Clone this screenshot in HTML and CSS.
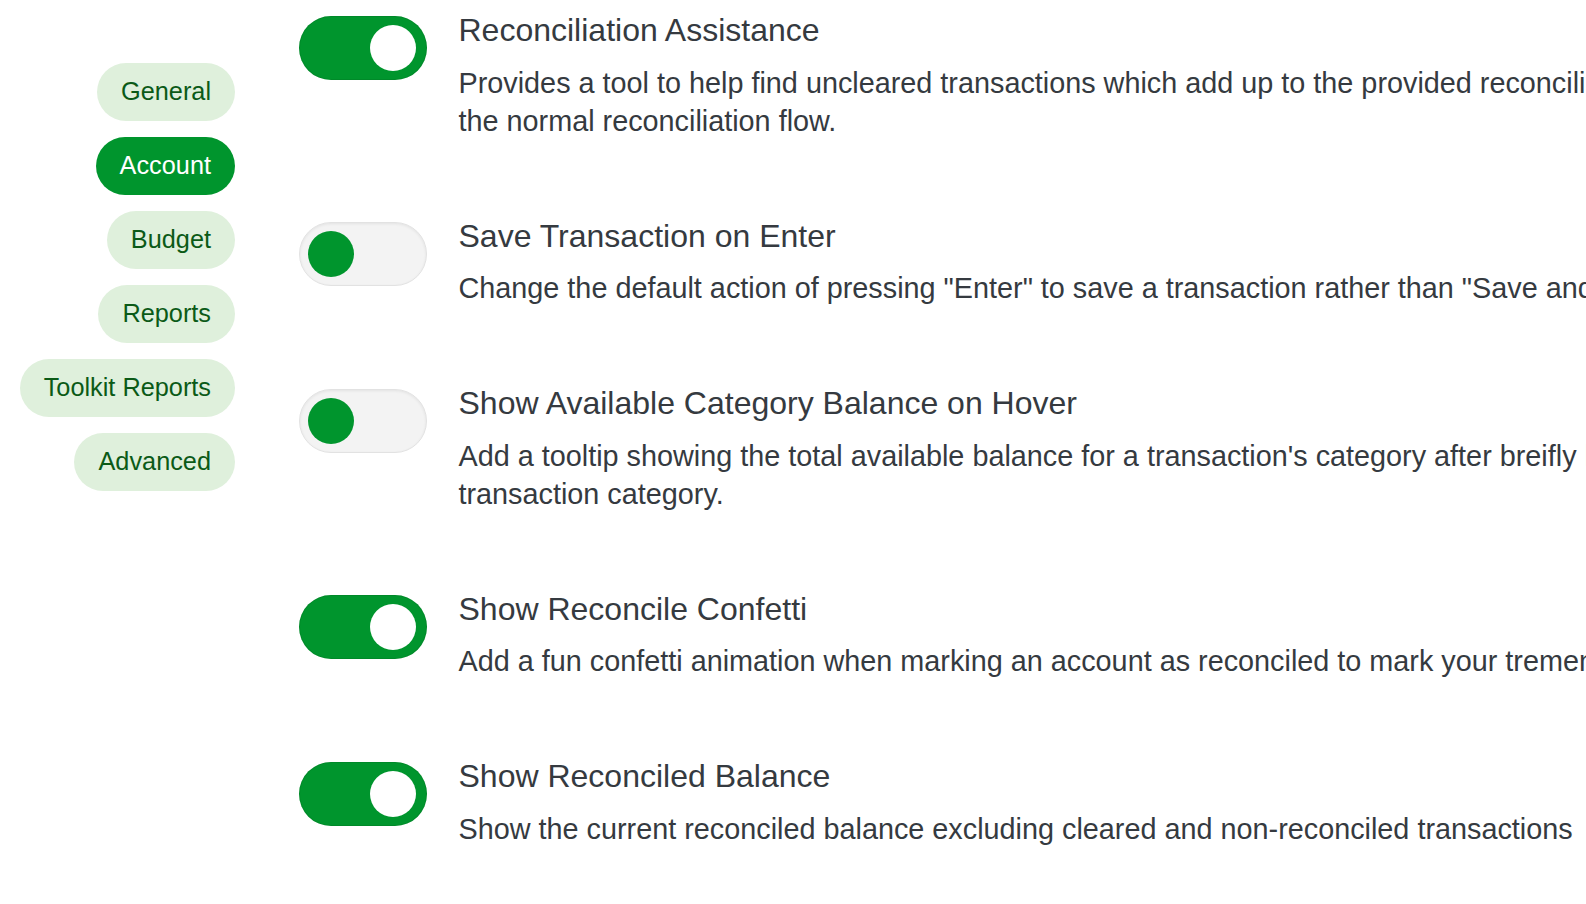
FILE: index.html
```html
<!DOCTYPE html>
<html lang="en">
<head>
<meta charset="utf-8">
<title>Settings</title>
<link rel="stylesheet" href="styles.css">
</head>
<body>
<div class="page">
  <nav class="sidebar">
    <a class="pill">General</a>
    <a class="pill active">Account</a>
    <a class="pill">Budget</a>
    <a class="pill">Reports</a>
    <a class="pill">Toolkit Reports</a>
    <a class="pill">Advanced</a>
  </nav>
  <main class="settings">
    <section class="setting">
      <div class="switch on"><span class="knob"></span></div>
      <div class="setting-text">
        <h3 class="setting-title">Reconciliation Assistance</h3>
        <p class="setting-desc">Provides a tool to help find uncleared transactions which add up to the provided reconciliation balance outside of the normal reconciliation flow.</p>
      </div>
    </section>
    <section class="setting">
      <div class="switch off"><span class="knob"></span></div>
      <div class="setting-text">
        <h3 class="setting-title">Save Transaction on Enter</h3>
        <p class="setting-desc">Change the default action of pressing "Enter" to save a transaction rather than "Save and add another".</p>
      </div>
    </section>
    <section class="setting">
      <div class="switch off"><span class="knob"></span></div>
      <div class="setting-text">
        <h3 class="setting-title">Show Available Category Balance on Hover</h3>
        <p class="setting-desc">Add a tooltip showing the total available balance for a transaction's category after breifly hovering over the transaction category.</p>
      </div>
    </section>
    <section class="setting">
      <div class="switch on"><span class="knob"></span></div>
      <div class="setting-text">
        <h3 class="setting-title">Show Reconcile Confetti</h3>
        <p class="setting-desc">Add a fun confetti animation when marking an account as reconciled to mark your tremendous achievement!</p>
      </div>
    </section>
    <section class="setting">
      <div class="switch on"><span class="knob"></span></div>
      <div class="setting-text">
        <h3 class="setting-title">Show Reconciled Balance</h3>
        <p class="setting-desc">Show the current reconciled balance excluding cleared and non-reconciled transactions</p>
      </div>
    </section>
  </main>
</div>
</body>
</html>
```
FILE: styles.css
```css
html, body {
  margin: 0;
  padding: 0;
  overflow: hidden;
  background: #ffffff;
  font-family: "Liberation Sans", Arial, Helvetica, sans-serif;
}

.page {
  display: flex;
  align-items: flex-start;
}

.sidebar {
  flex: none;
  width: 235px;
  padding-top: 63px;
  display: flex;
  flex-direction: column;
  align-items: flex-end;
  gap: 16px;
}

.pill {
  box-sizing: border-box;
  height: 58px;
  padding: 0 24px 2px;
  display: flex;
  align-items: center;
  border-radius: 29px;
  background: #dff0dc;
  color: #0b5a17;
  font-size: 25.3px;
  text-decoration: none;
  white-space: nowrap;
}

.pill.active {
  background: #00952d;
  color: #ffffff;
}

.settings {
  flex: none;
  margin-left: 63.5px;
  padding-top: 13px;
  display: flex;
  flex-direction: column;
  gap: 79px;
}

.setting {
  display: flex;
  align-items: flex-start;
}

.switch {
  flex: none;
  box-sizing: border-box;
  width: 128px;
  height: 64px;
  margin-top: 3px;
  margin-right: 32px;
  border-radius: 32px;
  display: flex;
  align-items: center;
}

.switch.on {
  background: #00952d;
  justify-content: flex-end;
  padding-right: 11px;
  box-shadow: inset 0 0 0 1px rgba(0, 60, 20, 0.12);
}

.switch.off {
  background: #f3f3f3;
  border: 1px solid #e2e2e2;
  box-shadow: inset 0 1px 3px rgba(0, 0, 0, 0.07);
  padding-left: 8px;
}

.knob {
  width: 46px;
  height: 46px;
  border-radius: 50%;
}

.switch.on .knob {
  background: #ffffff;
}

.switch.off .knob {
  background: #00952d;
}

.setting-text {
  flex: none;
  width: 1455px;
  color: #353a40;
}

.setting-title {
  margin: 0;
  font-size: 32px;
  font-weight: normal;
  line-height: 35px;
}

.setting-desc {
  margin: 15.5px 0 0;
  font-size: 28.8px;
  line-height: 38px;
}
```
